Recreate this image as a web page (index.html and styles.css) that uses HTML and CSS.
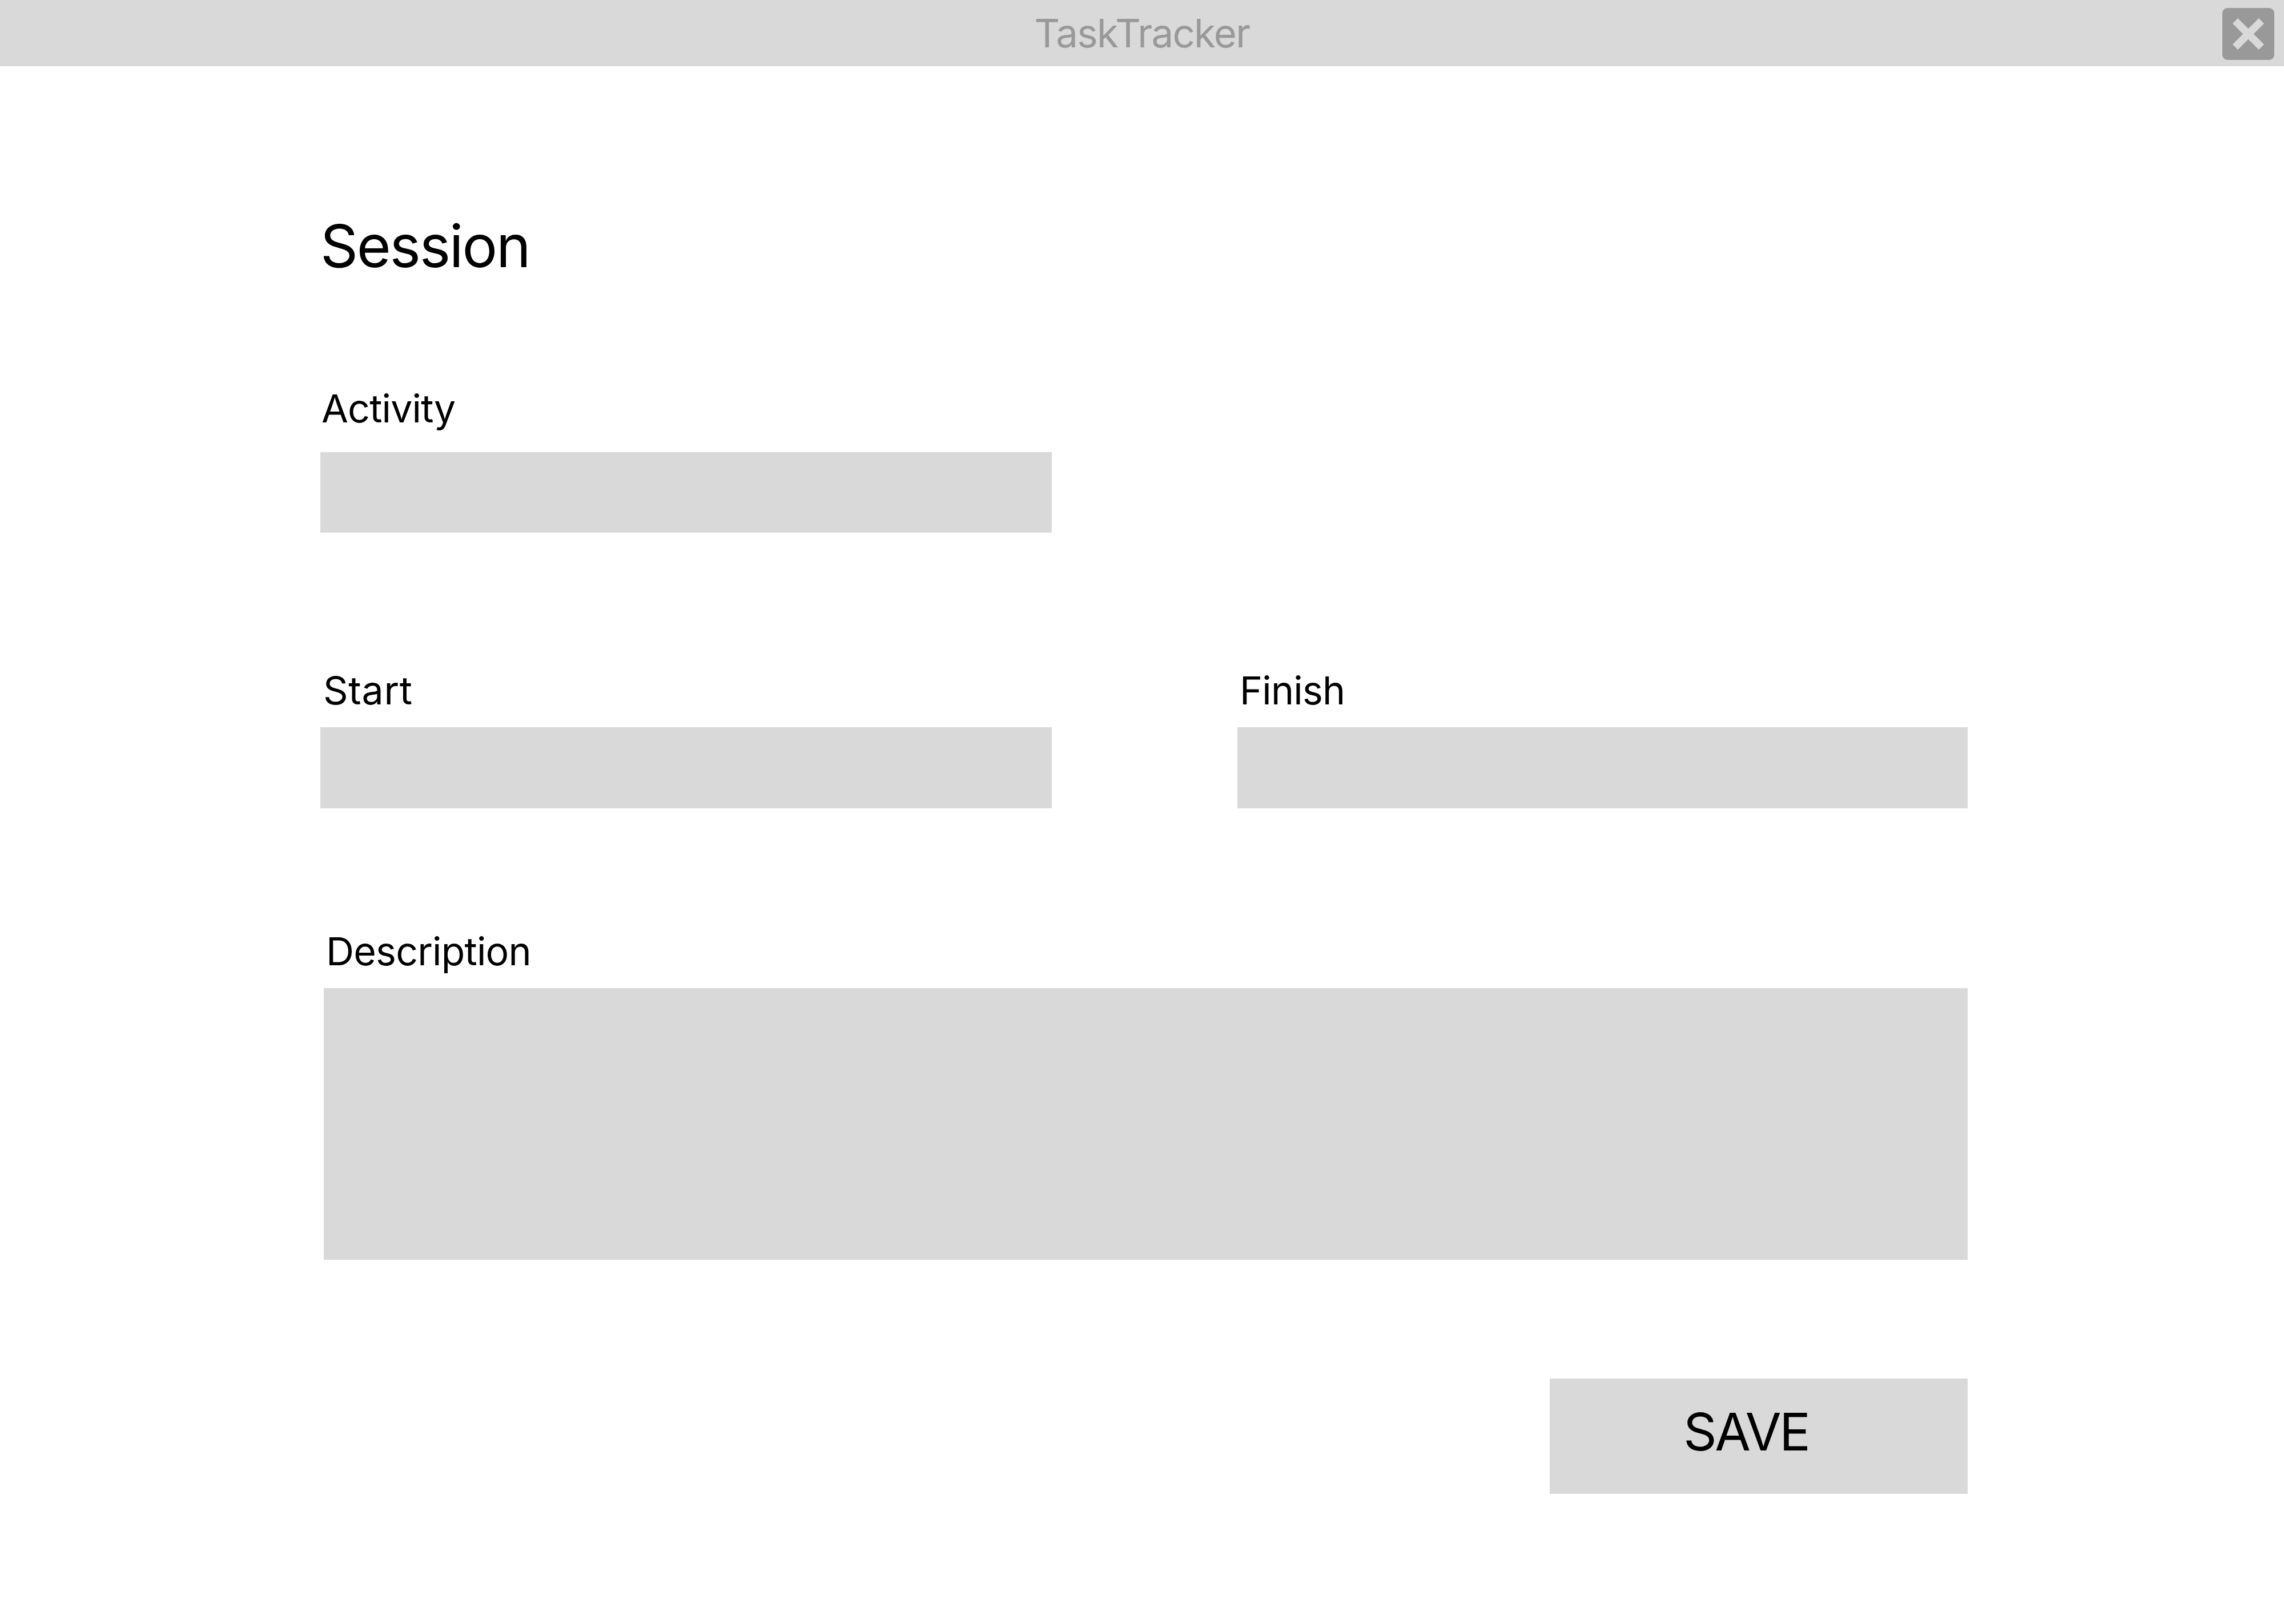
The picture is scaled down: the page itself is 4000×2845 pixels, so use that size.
FILE: index.html
```html
<!DOCTYPE html>
<html lang="en">
<head>
<meta charset="utf-8">
<title>TaskTracker</title>
<link rel="stylesheet" href="styles.css">
</head>
<body>
<header class="titlebar">
  <span class="titlebar-title">TaskTracker</span>
  <button class="close-btn" type="button" aria-label="Close">
    <svg class="close-icon" viewBox="0 0 91 91" width="91" height="91">
      <line x1="22.6" y1="22.6" x2="68.4" y2="68.4" />
      <line x1="68.4" y1="22.6" x2="22.6" y2="68.4" />
    </svg>
  </button>
</header>
<main class="form">
  <h1 class="form-title">Session</h1>
  <div class="field field-activity">
    <label class="field-label">Activity</label>
    <input class="field-input input-half" type="text">
  </div>
  <div class="field-row">
    <div class="field">
      <label class="field-label label-start">Start</label>
      <input class="field-input" type="text">
    </div>
    <div class="field">
      <label class="field-label label-finish">Finish</label>
      <input class="field-input" type="text">
    </div>
  </div>
  <div class="field field-desc">
    <label class="field-label">Description</label>
    <textarea class="field-input field-textarea"></textarea>
  </div>
  <div class="actions">
    <button class="save-btn" type="button">SAVE</button>
  </div>
</main>
</body>
</html>
```

FILE: styles.css
```css
* {
  box-sizing: border-box;
}

html, body {
  margin: 0;
  padding: 0;
  background: #ffffff;
}

body {
  font-family: Inter, "Noto Sans", "Liberation Sans", sans-serif;
  color: #000;
  width: 4000px;
  min-height: 2845px;
}

.titlebar {
  position: relative;
  height: 116px;
  background: #d9d9d9;
  display: flex;
  align-items: center;
  justify-content: center;
}

.titlebar-title {
  font-size: 69px;
  line-height: 1;
  letter-spacing: -0.025em;
  color: #999999;
}

.close-btn {
  position: absolute;
  top: 14px;
  right: 17px;
  width: 91px;
  height: 91px;
  padding: 0;
  border: none;
  border-radius: 9px;
  background: #999999;
  display: block;
}

.close-icon {
  display: block;
}

.close-icon line {
  stroke: #d9d9d9;
  stroke-width: 13;
  stroke-linecap: butt;
}

.form {
  width: 2885px;
  margin-left: 561px;
  padding-top: 263px;
  display: flex;
  flex-direction: column;
}

.form-title {
  margin: 0;
  font-size: 103px;
  font-weight: 400;
  line-height: 1;
  letter-spacing: -0.022em;
}

.field {
  display: flex;
  flex-direction: column;
  gap: 31px;
}

.field-activity {
  margin-top: 199px;
  gap: 43px;
}

.field-label {
  font-size: 68px;
  line-height: 1;
  letter-spacing: -0.012em;
  padding-left: 2px;
}

.label-start {
  padding-left: 5px;
  letter-spacing: 0.01em;
}

.label-finish {
  padding-left: 4px;
}

.field-input {
  display: block;
  height: 141px;
  border: none;
  margin: 0;
  padding: 0;
  background: #d9d9d9;
  font: inherit;
  outline: none;
}

.input-half {
  width: 1281px;
}

.field-row {
  margin-top: 242px;
  display: grid;
  grid-template-columns: 1281px 1279px;
  column-gap: 325px;
}

.field-row .field-input {
  width: 100%;
  height: 142px;
}

.field-desc {
  margin-top: 216px;
  margin-left: 6px;
}

.field-desc .field-label {
  padding-left: 4px;
}

.field-textarea {
  width: 2879px;
  height: 476px;
  resize: none;
}

.actions {
  margin-top: 208px;
  display: flex;
  justify-content: flex-end;
}

.save-btn {
  width: 732px;
  height: 202px;
  border: none;
  margin: 0;
  padding: 0 44px 16px 0;
  background: #d9d9d9;
  font-family: inherit;
  font-size: 91px;
  line-height: 1;
  letter-spacing: -0.035em;
  color: #000;
  display: flex;
  align-items: center;
  justify-content: center;
}
```
